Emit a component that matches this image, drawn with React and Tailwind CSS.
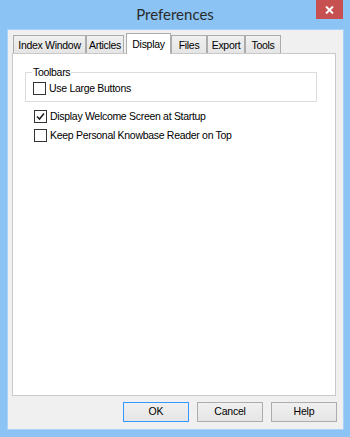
import React from "react";

const tabs = [
  { label: "Index Window", w: "w-[73px]" },
  { label: "Articles", w: "w-[38px]" },
  { label: "Display", w: "w-[45px]", active: true },
  { label: "Files", w: "w-[36px]" },
  { label: "Export", w: "w-[38px]" },
  { label: "Tools", w: "w-[36px]" },
];

const CheckBox = ({ checked }) => (
  <span className="w-[13px] h-[13px] border border-[#333333] bg-white flex items-center justify-center shrink-0">
    {checked && (
      <svg width="9" height="9" viewBox="0 0 9 9">
        <path d="M1 4.5 L3.5 7 L8 1.5" fill="none" stroke="#222" strokeWidth="1.6" />
      </svg>
    )}
  </span>
);

const Button = ({ children, primary }) => (
  <button
    className={`w-[66px] h-[20px] text-[10.5px] tracking-[-0.2px] text-black bg-gradient-to-b from-[#f0f0f0] to-[#e5e5e5] border ${
      primary ? "border-[#3399ff]" : "border-[#acacac]"
    }`}
  >
    {children}
  </button>
);

export default function App() {
  return (
    <div
      className="w-[350px] h-[437px] bg-[#8ac3f4] flex flex-col"
      style={{ fontFamily: '"Liberation Sans", Arial, sans-serif' }}
    >
      <div className="h-[29px] relative flex items-center justify-center">
        <span
          className="text-[15px] text-[#2b2b2b] pb-[1px]"
          style={{ fontFamily: 'Lato, "Noto Sans", sans-serif' }}
        >
          Preferences
        </span>
        <div className="absolute right-[7px] top-0 w-[27px] h-[19px] bg-[#c75050] flex items-center justify-center">
          <svg width="9" height="8" viewBox="0 0 9 8">
            <path d="M1 0.5 L8 7.5 M8 0.5 L1 7.5" stroke="#fff" strokeWidth="2" />
          </svg>
        </div>
      </div>

      <div className="ml-[7px] mr-[6px] mb-[7px] flex-1 bg-[#f0f0f0] border border-[#a8d2f7] flex flex-col px-[4px] text-[10.5px] tracking-[-0.3px]">
        <div className="flex items-end h-[23px] pl-[1px] relative z-10">
          {tabs.map((t) =>
            t.active ? (
              <div
                key={t.label}
                className={`${t.w} ml-[2px] h-[21px] -mb-[1px] bg-white border border-b-0 border-[#acacac] text-black flex justify-center pt-[3px]`}
              >
                {t.label}
              </div>
            ) : (
              <div
                key={t.label}
                className={`${t.w} h-[18px] bg-gradient-to-b from-[#f0f0f0] to-[#e5e5e5] border border-b-0 border-[#acacac] text-black flex justify-center pt-[2px]`}
              >
                {t.label}
              </div>
            )
          )}
        </div>

        <div className="w-[324px] h-[343px] bg-white border border-[#c9c9c9] flex flex-col pl-[12px] pt-[18px]">
          <div className="relative w-[292px] h-[30px] border border-[#dcdcdc] flex items-center pl-[7px] pt-[9px] pb-[6px]">
            <span className="absolute left-[6px] -top-[8px] bg-white px-[1px] text-black leading-[14px]">
              Toolbars
            </span>
            <label className="flex items-center gap-[3px] text-black">
              <CheckBox />
              Use Large Buttons
            </label>
          </div>

          <div className="flex flex-col gap-[6px] pl-[9px] pt-[8px]">
            <label className="flex items-center gap-[3px] text-black leading-[13px]">
              <CheckBox checked />
              Display Welcome Screen at Startup
            </label>
            <label className="flex items-center gap-[3px] text-black leading-[13px]">
              <CheckBox />
              Keep Personal Knowbase Reader on Top
            </label>
          </div>
        </div>

        <div className="flex justify-end gap-[8px] pt-[6px] pr-[2px]">
          <Button primary>OK</Button>
          <Button>Cancel</Button>
          <Button>Help</Button>
        </div>
      </div>
    </div>
  );
}
